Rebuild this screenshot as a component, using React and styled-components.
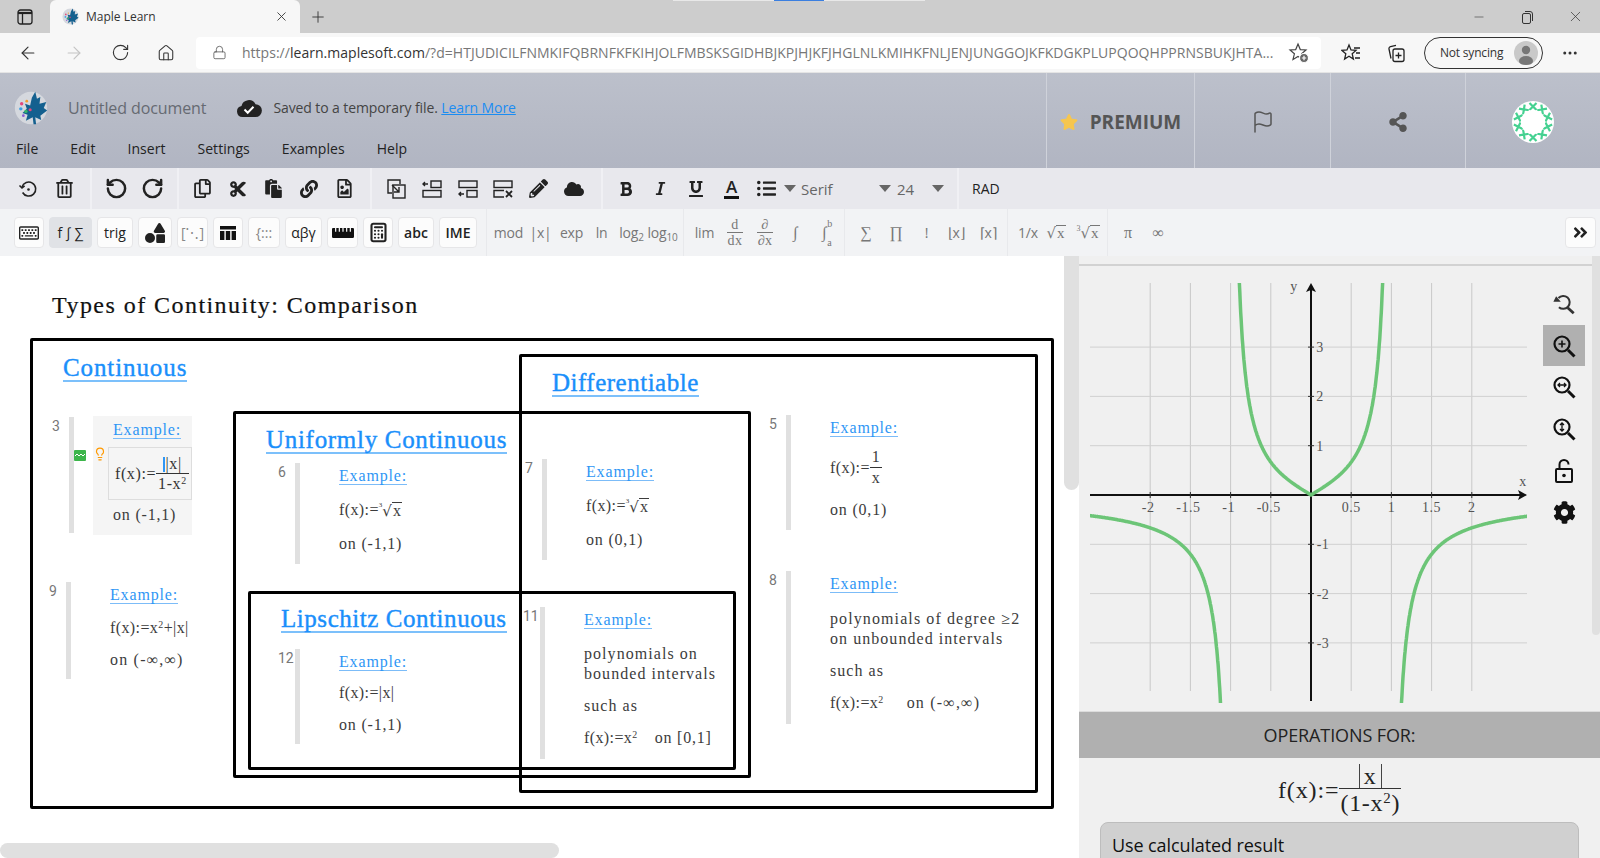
import React from 'react'
import styled, { createGlobalStyle } from 'styled-components';
import { ArrowLeft, ArrowRight, RotateCw, Home, X, Plus, Minus, Lock, MoreHorizontal, RotateCcw, Calculator, Flag, Lightbulb } from 'lucide-react';
import { FaRegTrashAlt, FaRegCopy, FaCut, FaPaste, FaLink, FaRegFileImage, FaPencilAlt, FaCloud, FaBold, FaItalic, FaUnderline, FaListUl, FaRegKeyboard, FaShapes, FaRulerHorizontal, FaShareAlt, FaStar, FaCog, FaAngleDoubleRight } from 'react-icons/fa';

const Global = createGlobalStyle`
html, body { margin: 0; padding: 0; height: 100%; overflow: hidden; background: #fff; }
* { box-sizing: border-box; }
body { font-family: "Open Sans", sans-serif; }
`;

const Page = styled.div`
width: 1600px;
height: 858px;
display: flex;
flex-direction: column;
overflow: hidden;
position: relative;
`;
const Spacer = styled.div`
width: ${p => p.$w}px;
flex-shrink: 0;
`;

/* browser frame */
const TopMark = styled.div`
position: absolute;
left: 673px;
top: 0;
width: 252px;
height: 1px;
background: linear-gradient(90deg, #e8e8e8 40%, #3b7fe0 40%, #3b7fe0 60%, #e8e8e8 60%);
`;
const TabStrip = styled.div`
height: 33px;
background: #cdcdcd;
display: flex;
align-items: flex-end;
flex-shrink: 0;
`;
const StripSlot = styled.div`
width: ${p => p.$w}px;
height: 33px;
display: flex;
align-items: center;
justify-content: center;
color: #333;
flex-shrink: 0;
`;
const Tab = styled.div`
width: 250px;
height: 33px;
background: #f7f7f7;
border-radius: 6px 6px 0 0;
display: flex;
align-items: center;
padding: 0 11px 0 12px;
font-size: 12px;
color: #333;
flex-shrink: 0;
`;
const TabTitle = styled.span`
margin-left: 7px;
flex: 1;
`;
const WindowButtons = styled.div`
margin-left: auto;
display: flex;
padding-right: 1px;
`;
const AddressRow = styled.div`
height: 40px;
background: #f7f7f7;
border-bottom: 1px solid #e4e4e4;
display: flex;
align-items: center;
padding-left: 2px;
flex-shrink: 0;
`;
const NavSlot = styled.div`
width: ${p => p.$w}px;
display: flex;
justify-content: center;
align-items: center;
color: ${p => p.$dim ? '#c4c4c4' : '#333'};
flex-shrink: 0;
`;
const UrlBox = styled.div`
width: 1125px;
height: 32px;
background: #fff;
border-radius: 4px;
display: flex;
align-items: center;
padding-left: 16px;
flex-shrink: 0;
margin-right: 8px;
color: #555;
`;
const UrlText = styled.div`
margin-left: 15px;
width: 1040px;
font-size: 14px;
letter-spacing: 0.03px;
white-space: nowrap;
overflow: hidden;
color: #777;
& b { font-weight: 400; color: #333; }
`;
const SyncPill = styled.div`
width: 119px;
height: 32px;
border: 1.5px solid #333;
border-radius: 16px;
display: flex;
align-items: center;
padding-left: 15px;
font-size: 12px;
letter-spacing: -0.2px;
color: #333;
margin-left: 5px;
flex-shrink: 0;
`;
const SyncAvatar = styled.span`
width: 24px;
height: 24px;
border-radius: 50%;
background: #c9c9c9;
margin-left: 11px;
overflow: hidden;
display: block;
`;

/* app header */
const Header = styled.div`
height: 95px;
display: flex;
background: linear-gradient(#bcc0cb, #b1b5c2);
flex-shrink: 0;
`;
const HeaderLeft = styled.div`
flex: 1;
display: flex;
flex-direction: column;
`;
const DocRow = styled.div`
height: 68px;
display: flex;
align-items: center;
padding: 1px 0 0 14px;
`;
const DocName = styled.span`
margin-left: 20px;
font-size: 16px;
color: #666a72;
letter-spacing: -0.1px;
`;
const SavedNote = styled.span`
margin-left: 11px;
font-size: 14px;
letter-spacing: -0.1px;
color: #444;
`;
const LearnMore = styled.a`
color: #1b8cf2;
text-decoration: underline;
`;
const MenuRow = styled.div`
display: flex;
gap: 32px;
padding-left: 16px;
font-size: 14px;
line-height: 16px;
letter-spacing: 0.05px;
color: #222;
`;
const HeadCell = styled.div`
width: ${p => p.$w}px;
border-left: 1px solid #cfd2da;
display: flex;
align-items: center;
justify-content: center;
gap: 12px;
color: #555;
padding-top: 2px;
`;
const PremiumText = styled.span`
font-size: 19px;
font-weight: 700;
color: #555;
`;

/* toolbars */
const ToolbarOne = styled.div`
height: 41px;
background: #e8e8ed;
display: flex;
flex-shrink: 0;
color: #222;
`;
const ToolGroup = styled.div`
display: flex;
align-items: center;
padding: 0 ${p => p.$right ?? 9}px 0 ${p => p.$left ?? 6}px;
border-right: 2px solid #f0f0f4;
`;
const IconCell = styled.div`
width: ${p => p.$w ?? 35.5}px;
height: 32px;
display: flex;
align-items: center;
justify-content: center;
flex-shrink: 0;
font-size: 14px;
`;
const Caret = styled.span`
width: 0;
height: 0;
border-left: 6px solid transparent;
border-right: 6px solid transparent;
border-top: 7px solid #666;
flex-shrink: 0;
`;
const FontName = styled.span`
font-size: 15px;
color: #666;
flex-shrink: 0;
width: ${p => p.$w}px;
`;
const RadLabel = styled.span`
font-size: 14px;
color: #222;
margin-left: 13px;
align-self: center;
`;
const ColorA = styled.span`
font-size: 17px;
line-height: 18px;
font-weight: 600;
border-bottom: 3px solid #111;
padding: 0 2px;
`;
const ToolbarTwo = styled.div`
height: 47px;
background: #f2f3f5;
display: flex;
flex-shrink: 0;
`;
const ButtonRow = styled.div`
display: flex;
align-items: center;
gap: 5px;
padding-left: 14px;
width: 486px;
`;
const PadButton = styled.button`
width: ${p => p.$w}px;
height: 31px;
padding: 0;
flex-shrink: 0;
display: flex;
align-items: center;
justify-content: center;
border: 1px solid ${p => p.$active ? '#e0e2e6' : '#e6e6e8'};
border-radius: 4px;
background: ${p => p.$active ? '#e0e2e6' : '#fcfcfc'};
color: ${p => p.$faded ? '#888' : '#222'};
font-family: "Open Sans", sans-serif;
font-size: 14px;
font-weight: ${p => p.$bold ? 600 : 400};
`;
const PadSection = styled.div`
display: flex;
align-items: center;
padding: 0 ${p => p.$right ?? 0}px 0 5px;
border-left: 1px solid #e8e9ec;
`;
const Key = styled.div`
width: ${p => p.$w}px;
height: 40px;
display: flex;
align-items: center;
justify-content: center;
flex-shrink: 0;
font-size: 14px;
letter-spacing: -0.2px;
color: #777;
& sub { font-size: 10px; line-height: 0; vertical-align: -3px; }
`;
const SerifKey = styled(Key)`
font-family: "Liberation Serif", serif;
font-size: 16px;
`;
const MiniFrac = styled.span`
display: inline-flex;
flex-direction: column;
align-items: center;
font-family: "Liberation Serif", serif;
font-size: 14px;
letter-spacing: 0.4px;
line-height: 15px;
`;
const MiniBottom = styled.span`
border-top: 1px solid #777;
padding: 0 1px;
`;
const Limits = styled.span`
display: inline-flex;
flex-direction: column;
justify-content: space-between;
height: 28px;
font-size: 10px;
line-height: 9px;
margin-left: 1px;
`;
const MoreButton = styled(PadButton)`
margin: 8px 4px 0 auto;
`;

/* main area */
const Main = styled.div`
flex: 1;
display: flex;
min-height: 0;
`;
const Editor = styled.div`
width: 1079px;
position: relative;
background: #fff;
flex-shrink: 0;
font-family: "Liberation Serif", serif;
overflow: hidden;
`;
const Thumb = styled.div`
position: absolute;
left: 1064px;
top: 0;
width: 15px;
height: 234px;
background: #e0e0e0;
border-radius: 0 0 8px 8px;
`;
const HThumb = styled.div`
position: absolute;
left: 0;
bottom: 0;
width: 559px;
height: 15px;
background: #e0e0e0;
border-radius: 8px;
`;
const DocTitle = styled.div`
position: absolute;
left: 52px;
top: 34px;
font-size: 24px;
line-height: 30px;
letter-spacing: 1.45px;
color: #111;
white-space: nowrap;
-webkit-text-stroke: 0.2px #111;
`;
/* overlapping region boxes sit on the free document canvas */
const Region = styled.div`
position: absolute;
left: ${p => p.$x}px;
top: ${p => p.$y}px;
width: ${p => p.$w}px;
height: ${p => p.$h}px;
border: 3px solid #000;
border-radius: 2px;
`;
const Heading = styled.div`
position: absolute;
left: ${p => p.$x}px;
top: ${p => p.$y}px;
height: 28px;
line-height: 28px;
font-size: 25px;
letter-spacing: ${p => p.$sp}px;
color: #1a8ffb;
border-bottom: 2px solid #7cc0fb;
white-space: nowrap;
-webkit-text-stroke: 0.4px #1a8ffb;
`;
const Group = styled.div`
position: absolute;
left: ${p => p.$x}px;
top: ${p => p.$y}px;
display: flex;
`;
const Num = styled.div`
width: 17px;
font-family: Roboto, sans-serif;
font-size: 14px;
line-height: 18px;
color: #777;
flex-shrink: 0;
`;
const Bar = styled.div`
width: 5px;
background: #e0e0e0;
flex-shrink: 0;
`;
const Body = styled.div`
display: flex;
flex-direction: column;
margin-left: 39px;
padding-top: 3px;
padding-bottom: ${p => p.$pad}px;
`;
const SelectedBody = styled(Body)`
margin: -1px 0 -2px 19px;
padding-left: 20px;
padding-top: 4px;
width: 99px;
background: #f5f5f5;
`;
const Row = styled.div`
display: flex;
align-items: center;
min-height: 20px;
margin-top: ${p => p.$gap ?? 0}px;
font-size: 16px;
line-height: 20px;
letter-spacing: ${p => p.$sp ?? 0.8}px;
color: #3c3c3c;
white-space: nowrap;
`;
const Example = styled.span`
display: block;
height: 18px;
line-height: 17px;
font-size: 16px;
letter-spacing: 0.85px;
color: #2e96f5;
border-bottom: 1.5px solid #7cbcf8;
`;
const Gapped = styled.span`
margin-left: ${p => p.$left}px;
letter-spacing: ${p => p.$sp ?? 0.8}px;
`;
const Wave = styled.svg`
position: absolute;
left: 22px;
top: 33px;
`;
const Bulb = styled.span`
position: absolute;
left: 41px;
top: 30px;
color: #f90;
`;
const FormulaBox = styled.div`
margin: 7px 0 0 -5px;
width: 84px;
height: 53px;
border: 1px solid #ddd;
display: flex;
align-items: center;
padding-left: 6px;
font-size: 16px;
color: #333;
white-space: nowrap;
letter-spacing: 0.6px;
`;
const Frac = styled.span`
display: inline-flex;
flex-direction: column;
align-items: center;
line-height: ${p => p.$lh ?? 20}px;
`;
const FracBottom = styled.span`
border-top: 1px solid #333;
align-self: stretch;
text-align: center;
padding: 0 2px;
`;
const Sup = styled.span`
font-size: 0.62em;
vertical-align: 0.55em;
line-height: 0;
`;
const Caretbar = styled.span`
display: inline-block;
width: 1.5px;
height: 15px;
background: #2e96f5;
vertical-align: -3px;
margin-right: 1px;
`;
const Root = styled.span`
display: inline-flex;
align-items: flex-end;
letter-spacing: 0;
`;
const RootIndex = styled.span`
font-size: ${p => p.$size ?? 10}px;
line-height: 1;
align-self: flex-start;
`;
const RootMark = styled.span`
font-family: "DejaVu Sans", sans-serif;
font-size: ${p => p.$size ?? 17}px;
line-height: 1;
`;
const Radicand = styled.span`
border-top: 1px solid currentColor;
line-height: 1;
font-size: ${p => p.$size ?? 16}px;
padding: 0 1px;
`;

/* graph panel */
const Panel = styled.div`
flex: 1;
background: #f0f0f0;
display: flex;
flex-direction: column;
position: relative;
min-width: 0;
overflow: hidden;
`;
const PanelThumb = styled.div`
position: absolute;
right: 0;
top: 0;
width: 8px;
height: 379px;
background: #e0e0e0;
border-radius: 0 0 4px 4px;
`;
const TopRule = styled.div`
margin: 8px 8px 0 0;
height: 2px;
background: #d2d2d2;
flex-shrink: 0;
`;
const GraphRow = styled.div`
display: flex;
height: 446px;
flex-shrink: 0;
border-bottom: 1px solid #dcdcdc;
`;
const GraphSvg = styled.svg`
flex-shrink: 0;
`;
const GraphLabel = styled.text`
font-family: "Liberation Serif", serif;
font-size: 14px;
fill: #555;
text-anchor: middle;
letter-spacing: 0.5px;
`;
const ToolColumn = styled.div`
width: 42px;
padding-top: 17px;
display: flex;
flex-direction: column;
flex-shrink: 0;
`;
const ToolSlot = styled.div`
height: 41.7px;
display: flex;
align-items: center;
justify-content: center;
background: ${p => p.$active ? '#b0b0b0' : 'transparent'};
color: #111;
`;
const OpsBar = styled.div`
height: 46px;
background: #b0b0b0;
display: flex;
align-items: center;
justify-content: center;
font-size: 18px;
letter-spacing: -0.1px;
color: #222;
flex-shrink: 0;
`;
const OpsFormula = styled.div`
height: 64px;
display: flex;
align-items: center;
justify-content: center;
font-family: "Liberation Serif", serif;
font-size: 24px;
color: #222;
letter-spacing: 0.9px;
flex-shrink: 0;
`;
const TallBars = styled.span`
border-left: 1px solid #444;
border-right: 1px solid #444;
padding: 0 4px;
line-height: 24px;
`;
const OpsBottom = styled.span`
border-top: 1.5px solid #333;
padding: 0 1px;
line-height: 28px;
letter-spacing: 0.7px;
`;
const ResultButton = styled.div`
margin: 0 21px;
height: 50px;
padding: 8px 11px;
border: 1px solid #bdbdbd;
border-radius: 8px 8px 0 0;
background: #d0d0d0;
font-size: 18px;
font-weight: 500;
line-height: 28px;
letter-spacing: -0.1px;
color: #111;
flex-shrink: 0;
`;

const LeafLogo = ({ size }) => (
  <svg width={size} height={size} viewBox="0 0 40 40">
    <circle cx="20" cy="20" r="19" fill="#d5d8de" />
    <polygon points="25,1 27,9 31,7 30,15 38,13 35,20 39,23 31,29 32,34 25,31 26,39 23,39 22,31 14,35 16,28 10,26 15,21 13,15 19,17 21,8" fill="#14608f" />
    <circle cx="9" cy="15" r="2" fill="#e3487c" />
    <circle cx="15" cy="12" r="1.6" fill="#f39a2c" />
    <circle cx="8" cy="21" r="2" fill="#3ba0e6" />
    <circle cx="14" cy="24" r="2" fill="#36b56a" />
    <circle cx="19" cy="22" r="1.8" fill="#e3487c" />
    <circle cx="11" cy="29" r="1.6" fill="#8a5bd6" />
  </svg>
);

const SidebarIcon = () => (
  <svg width="16" height="16" viewBox="0 0 16 16" fill="none" stroke="#222" strokeWidth="1.3">
    <rect x="1" y="1" width="14" height="14" rx="2.5" />
    <path d="M1 4h14" strokeWidth="2.2" />
    <path d="M5.5 4v11" />
  </svg>
);

const AddFavorite = () => (
  <svg width="22" height="22" viewBox="0 0 22 22" fill="none" stroke="#444" strokeWidth="1.2">
    <polygon points="10,2 12.3,7.6 18,8 13.6,11.8 15,17.4 10,14.4 5,17.4 6.4,11.8 2,8 7.7,7.6" />
    <circle cx="16" cy="16" r="4.5" fill="#666" stroke="#fff" />
    <path d="M16 13.8v4.4M13.8 16h4.4" stroke="#fff" />
  </svg>
);

const Favorites = () => (
  <svg width="20" height="20" viewBox="0 0 20 20" fill="none" stroke="#222" strokeWidth="1.3">
    <polygon points="8,2 10,7 15,7.4 11.2,10.8 12.4,16 8,13.2 3.6,16 4.8,10.8 1,7.4 6,7" />
    <path d="M13 5h6M15 10h4M14 15h5" />
  </svg>
);

const Collections = () => (
  <svg width="20" height="20" viewBox="0 0 20 20" fill="none" stroke="#222" strokeWidth="1.3">
    <path d="M5 15.5 3 6a2 2 0 0 1 1.5-2.4L10 2.4" />
    <rect x="7" y="6" width="11" height="12.5" rx="2" />
    <path d="M12.5 9.5v6M9.5 12.5h6" />
  </svg>
);

const RestoreIcon = () => (
  <svg width="13" height="14" viewBox="0 0 13 14" fill="none" stroke="#333">
    <rect x="1.5" y="3.5" width="8" height="10" rx="1.5" />
    <path d="M4 1.5h5a2.500 2.500 0 0 1 2.500 2.500v7" />
  </svg>
);

const CloudCheck = () => (
  <svg width="26" height="20" viewBox="0 0 26 20">
    <path d="M6.5 19a5.5 5.5 0 0 1-1-10.9A7.5 7.5 0 0 1 19.5 6.2 6.4 6.4 0 0 1 19.5 19z" fill="#222" />
    <path d="M8.5 11.5l3.2 3.2 5.8-6" stroke="#fff" strokeWidth="2" fill="none" />
  </svg>
);

const ResetHistory = () => (
  <svg width="20" height="20" viewBox="0 0 20 20" fill="none" stroke="#222" strokeWidth="1.6">
    <path d="M4.6 13.5A7 7 0 1 0 4 8" />
    <path d="M1.5 6.5 4 9l2.6-2.2" />
    <circle cx="10.5" cy="10.5" r="1.3" fill="#222" stroke="none" />
  </svg>
);

const InsertInto = () => (
  <svg width="22" height="22" viewBox="0 0 22 22" fill="none" stroke="#222" strokeWidth="1.4">
    <path d="M14 6V2H2v13h4" />
    <rect x="7" y="7" width="12" height="13" />
    <path d="M6 7l7 7M13 9v5H8" />
  </svg>
);

const AddRegion = ({ after }) => (
  <svg width="24" height="20" viewBox="0 0 24 20" fill="none" stroke="#222" strokeWidth="1.4">
    {after ? (
      <>
        <rect x="3" y="2" width="18" height="6.5" />
        <rect x="11" y="11.5" width="10" height="6.5" />
        <path d="M3 15h5M5 13l-2 2 2 2" />
      </>
    ) : (
      <>
        <rect x="11" y="2" width="10" height="6.5" />
        <rect x="3" y="11.5" width="18" height="6.5" />
        <path d="M3 5h5M5 3 3 5l2 2" />
      </>
    )}
  </svg>
);

const DeleteRegion = () => (
  <svg width="24" height="20" viewBox="0 0 24 20" fill="none" stroke="#222" strokeWidth="1.4">
    <rect x="3" y="2" width="18" height="6.5" />
    <path d="M13 11.5H3V18h10" />
    <path d="M15 12l6 6M21 12l-6 6" strokeWidth="1.8" />
  </svg>
);

const TableIcon = () => (
  <svg width="16" height="16" viewBox="0 0 16 16" fill="#111">
    <rect x="0" y="1" width="16" height="3.5" />
    <rect x="0" y="6" width="4.4" height="9" />
    <rect x="5.8" y="6" width="4.4" height="9" />
    <rect x="11.6" y="6" width="4.4" height="9" />
  </svg>
);

const Glass = ({ children }) => (
  <svg width="26" height="26" viewBox="0 0 26 26" fill="none" stroke="#111" strokeWidth="2.2">
    <circle cx="11" cy="11" r="7.5" />
    <path d="M17 17l6.5 6.5" strokeWidth="3" />
    {children}
  </svg>
);

const ResetGlass = () => (
  <svg width="24" height="24" viewBox="0 0 26 26" fill="none" stroke="#333" strokeWidth="2.2">
    <path d="M7 6.500A7 7 0 1 1 7.500 16.500" />
    <path d="M1.500 10.500h8l-5-6z" fill="#333" stroke="none" />
    <path d="M17 17l6.500 6" strokeWidth="3" />
  </svg>
);

const OpenLock = () => (
  <svg width="22" height="26" viewBox="0 0 22 26" fill="none" stroke="#111" strokeWidth="2">
    <rect x="3" y="11" width="16" height="13" rx="1" />
    <path d="M6.500 11V6.500a4.500 4.500 0 0 1 9 0" />
    <circle cx="11" cy="17.500" r="1.800" fill="#111" stroke="none" />
  </svg>
);

const IdAvatar = () => {
  const marks = Array.from({ length: 10 }, (_, i) => i * 36);
  return (
    <svg width="42" height="42" viewBox="0 0 42 42">
      <circle cx="21" cy="21" r="21" fill="#fff" />
      {marks.map(a => (
        <g key={a} transform={`rotate(${a} 21 21)`}>
          <path d="M17.500 2l7 7M24.500 2l-7 7" stroke="#45d191" strokeWidth="2.2" />
        </g>
      ))}
      <circle cx="21" cy="21" r="12" fill="#fff" />
    </svg>
  );
};

/* y = |x| / (1 - x^2) in the graph's pixels */
const ox = 232;
const oy = 229;
const ux = 80.4;
const uy = 49.3;
const px = x => ox + x * ux;
const py = y => oy - y * uy;
const branch = (from, to) => {
  const pts = [];
  for (let x = from; x <= to; x += 0.004) {
    const y = Math.abs(x) / (1 - x * x);
    if (Math.abs(y) < 12) pts.push(`${px(x).toFixed(1)},${py(y).toFixed(1)}`);
  }
  return 'M' + pts.join('L');
};

const xTicks = [-2, -1.5, -1, -0.5, 0.5, 1, 1.5, 2];
const yTicks = [3, 2, 1, -1, -2, -3];

const Graph = () => (
  <GraphSvg width="464" height="446" viewBox="0 0 464 446">
    <defs>
      <clipPath id="plot"><rect x="11" y="17" width="437" height="420" /></clipPath>
    </defs>
    {xTicks.map(t => <line key={t} x1={px(t)} x2={px(t)} y1="17" y2="425" stroke="#c8c8c8" />)}
    {yTicks.map(t => <line key={t} x1="11" x2="448" y1={py(t)} y2={py(t)} stroke="#d0d0d0" />)}
    <line x1="11" x2="444" y1={oy} y2={oy} stroke="#111" strokeWidth="2" />
    <line x1={ox} x2={ox} y1="22" y2="435" stroke="#111" strokeWidth="2" />
    <polygon points="448,229 439,224 441,229 439,234" fill="#111" />
    <polygon points="232,17 227,26 232,24 237,26" fill="#111" />
    {xTicks.map(t => <line key={t} x1={px(t)} x2={px(t)} y1={oy - 3} y2={oy + 3} stroke="#333" />)}
    {yTicks.map(t => <line key={t} x1={ox - 3} x2={ox + 3} y1={py(t)} y2={py(t)} stroke="#333" />)}
    {xTicks.map(t => <GraphLabel key={t} x={px(t) - (t < 0 ? 2 : 0)} y={oy + 17}>{t}</GraphLabel>)}
    {yTicks.map(t => <GraphLabel key={t} x={ox + (t < 0 ? 12 : 9)} y={py(t) + 5}>{t}</GraphLabel>)}
    <GraphLabel x="444" y="220">x</GraphLabel>
    <GraphLabel x="215" y="25">y</GraphLabel>
    <g clipPath="url(#plot)" fill="none" stroke="#6cc577" strokeWidth="3.5">
      <path d={branch(-2.9, -1.01)} />
      <path d={branch(-0.99, 0.99)} />
      <path d={branch(1.01, 2.9)} />
    </g>
  </GraphSvg>
);

const CubeRoot = () => (
  <Root>
    <RootIndex $size={7}>3</RootIndex>
    <RootMark $size={15}>√</RootMark>
    <Radicand>x</Radicand>
  </Root>
);

const SqrtKey = ({ index }) => (
  <Root>
    {index && <RootIndex $size={8}>3</RootIndex>}
    <RootMark $size={15}>√</RootMark>
    <Radicand $size={15}>x</Radicand>
  </Root>
);

const App = () => {
  return (
    <Page>
      <Global />
      <TopMark />
      <TabStrip>
        <StripSlot $w={50}><SidebarIcon /></StripSlot>
        <Tab>
          <LeafLogo size={17} />
          <TabTitle>Maple Learn</TabTitle>
          <X size={15} strokeWidth={1.4} />
        </Tab>
        <StripSlot $w={36}><Plus size={18} strokeWidth={1.2} /></StripSlot>
        <WindowButtons>
          <StripSlot $w={48}><Minus size={14} strokeWidth={1} /></StripSlot>
          <StripSlot $w={48}><RestoreIcon /></StripSlot>
          <StripSlot $w={48}><X size={17} strokeWidth={1} /></StripSlot>
        </WindowButtons>
      </TabStrip>
      <AddressRow>
        <NavSlot $w={52}><ArrowLeft size={20} strokeWidth={1.4} /></NavSlot>
        <NavSlot $w={40} $dim><ArrowRight size={20} strokeWidth={1.4} /></NavSlot>
        <NavSlot $w={52}><RotateCw size={19} strokeWidth={1.4} /></NavSlot>
        <NavSlot $w={40}><Home size={18} strokeWidth={1.4} /></NavSlot>
        <Spacer $w={10} />
        <UrlBox>
          <Lock size={15} strokeWidth={1.3} />
          <UrlText>https://<b>learn.maplesoft.com</b>/?d=HTJUDICILFNMKIFQBRNFKFKIHJOLFMBSKSGIDHBJKPJHJKFJHGLNLKMIHKFNLJENJUNGGOJKFKDGKPLUPQOQHPPRNSBUKJHTA...</UrlText>
          <NavSlot $w={44}><AddFavorite /></NavSlot>
        </UrlBox>
        <NavSlot $w={44}><Favorites /></NavSlot>
        <NavSlot $w={46}><Collections /></NavSlot>
        <SyncPill>
          Not syncing
          <SyncAvatar>
            <svg width="24" height="24" viewBox="0 0 24 24" fill="#777"><circle cx="12" cy="9" r="4.2" /><ellipse cx="12" cy="20" rx="7" ry="5" /></svg>
          </SyncAvatar>
        </SyncPill>
        <NavSlot $w={54}><MoreHorizontal size={18} strokeWidth={2} /></NavSlot>
      </AddressRow>

      <Header>
        <HeaderLeft>
          <DocRow>
            <LeafLogo size={34} />
            <DocName>Untitled document</DocName>
            <Spacer $w={30} />
            <CloudCheck />
            <SavedNote>Saved to a temporary file. <LearnMore>Learn More</LearnMore></SavedNote>
          </DocRow>
          <MenuRow>
            <span>File</span><span>Edit</span><span>Insert</span><span>Settings</span><span>Examples</span><span>Help</span>
          </MenuRow>
        </HeaderLeft>
        <HeadCell $w={148}><FaStar size={18} color="#f6c64f" /><PremiumText>PREMIUM</PremiumText></HeadCell>
        <HeadCell $w={136}><Flag size={24} strokeWidth={1.5} /></HeadCell>
        <HeadCell $w={135}><FaShareAlt size={20} /></HeadCell>
        <HeadCell $w={135}><IdAvatar /></HeadCell>
      </Header>

      <ToolbarOne>
        <ToolGroup $left={10} $right={8}>
          <IconCell $w={36}><ResetHistory /></IconCell>
          <IconCell $w={36}><FaRegTrashAlt size={19} /></IconCell>
        </ToolGroup>
        <ToolGroup $right={7}>
          <IconCell $w={36}><RotateCcw size={23} strokeWidth={2.6} /></IconCell>
          <IconCell $w={36}><RotateCw size={23} strokeWidth={2.6} /></IconCell>
        </ToolGroup>
        <ToolGroup $right={7.5}>
          <IconCell><FaRegCopy size={19} /></IconCell>
          <IconCell><FaCut size={18} /></IconCell>
          <IconCell><FaPaste size={19} /></IconCell>
          <IconCell><FaLink size={18} /></IconCell>
          <IconCell><FaRegFileImage size={19} /></IconCell>
        </ToolGroup>
        <ToolGroup $left={7}>
          <IconCell><InsertInto /></IconCell>
          <IconCell><AddRegion /></IconCell>
          <IconCell><AddRegion after /></IconCell>
          <IconCell><DeleteRegion /></IconCell>
          <IconCell><FaPencilAlt size={19} /></IconCell>
          <IconCell><FaCloud size={20} /></IconCell>
        </ToolGroup>
        <ToolGroup $left={5} $right={8}>
          <IconCell $w={35}><FaBold size={16} /></IconCell>
          <IconCell $w={35}><FaItalic size={15} /></IconCell>
          <IconCell $w={36}><FaUnderline size={16} /></IconCell>
          <IconCell $w={35}><ColorA>A</ColorA></IconCell>
          <IconCell $w={35}><FaListUl size={19} /></IconCell>
          <Caret />
          <Spacer $w={5} />
          <FontName $w={78}>Serif</FontName>
          <Caret />
          <Spacer $w={6} />
          <FontName $w={35}>24</FontName>
          <Caret />
          <Spacer $w={5} />
        </ToolGroup>
        <RadLabel>RAD</RadLabel>
      </ToolbarOne>

      <ToolbarTwo>
        <ButtonRow>
          <PadButton $w={30}><FaRegKeyboard size={20} /></PadButton>
          <PadButton $w={43} $active>f ∫ ∑</PadButton>
          <PadButton $w={36}>trig</PadButton>
          <PadButton $w={34}><FaShapes size={20} /></PadButton>
          <PadButton $w={31} $faded>[⋱]</PadButton>
          <PadButton $w={30}><TableIcon /></PadButton>
          <PadButton $w={32} $faded>{'{:::'}</PadButton>
          <PadButton $w={37}>αβγ</PadButton>
          <PadButton $w={31}><FaRulerHorizontal size={22} color="#111" /></PadButton>
          <PadButton $w={30}><Calculator size={21} strokeWidth={2.4} /></PadButton>
          <PadButton $w={36} $bold>abc</PadButton>
          <PadButton $w={38} $bold>IME</PadButton>
        </ButtonRow>
        <PadSection $right={5}>
          <Key $w={33}>mod</Key>
          <Key $w={31}>|x|</Key>
          <Key $w={31}>exp</Key>
          <Key $w={29}>ln</Key>
          <Key $w={31}><span>log<sub>2</sub></span></Key>
          <Key $w={31}><span>log<sub>10</sub></span></Key>
        </PadSection>
        <PadSection>
          <Key $w={31}>lim</Key>
          <Key $w={30}><MiniFrac>d<MiniBottom>dx</MiniBottom></MiniFrac></Key>
          <Key $w={30}><MiniFrac>∂<MiniBottom>∂x</MiniBottom></MiniFrac></Key>
          <SerifKey $w={30}>∫</SerifKey>
          <SerifKey $w={34}>∫<Limits><span>b</span><span>a</span></Limits></SerifKey>
        </PadSection>
        <PadSection>
          <SerifKey $w={32}>∑</SerifKey>
          <SerifKey $w={28}>∏</SerifKey>
          <Key $w={33}>!</Key>
          <Key $w={26}>⌊x⌋</Key>
          <Key $w={38}>⌈x⌉</Key>
        </PadSection>
        <PadSection>
          <Key $w={30}>1/x</Key>
          <SerifKey $w={26}><SqrtKey /></SerifKey>
          <SerifKey $w={38}><SqrtKey index /></SerifKey>
        </PadSection>
        <PadSection>
          <SerifKey $w={30}>π</SerifKey>
          <SerifKey $w={30}>∞</SerifKey>
        </PadSection>
        <MoreButton $w={31}><FaAngleDoubleRight size={17} /></MoreButton>
      </ToolbarTwo>

      <Main>
        <Editor>
          <DocTitle>Types of Continuity: Comparison</DocTitle>

          <Region $x={30} $y={82} $w={1024} $h={471} />
          <Region $x={519} $y={98} $w={519} $h={439} />
          <Region $x={233} $y={155} $w={518} $h={367} />
          <Region $x={248} $y={335} $w={488} $h={179} />

          <Heading $x={63} $y={98} $sp={0.9}>Continuous</Heading>
          <Heading $x={552} $y={113} $sp={0.5}>Differentiable</Heading>
          <Heading $x={266} $y={170} $sp={0.7}>Uniformly Continuous</Heading>
          <Heading $x={281} $y={349} $sp={0.55}>Lipschitz Continuous</Heading>

          <Group $x={52} $y={161}>
            <Num>3</Num>
            <Bar />
            <SelectedBody $pad={10}>
              <Row><Example>Example:</Example></Row>
              <FormulaBox>
                f(x):=
                <Frac $lh={19}>
                  <span><Caretbar />|x|</span>
                  <FracBottom>1-x<Sup>2</Sup></FracBottom>
                </Frac>
              </FormulaBox>
              <Row $gap={5}>on (-1,1)</Row>
            </SelectedBody>
            <Wave width="12" height="11" viewBox="0 0 12 11">
              <rect width="12" height="11" rx="1" fill="#3cb54a" />
              <path d="M1 6l2-2 2 2 2-2 2 2 2-2" stroke="#fff" fill="none" />
            </Wave>
            <Bulb><Lightbulb size={14} strokeWidth={2} /></Bulb>
          </Group>

          <Group $x={49} $y={326}>
            <Num>9</Num>
            <Bar />
            <Body $pad={9}>
              <Row><Example>Example:</Example></Row>
              <Row $gap={13} $sp={0.4}><span>f(x):=x<Sup>2</Sup>+|x|</span></Row>
              <Row $gap={12} $sp={1.2}>on (-∞,∞)</Row>
            </Body>
          </Group>

          <Group $x={278} $y={207}>
            <Num>6</Num>
            <Bar />
            <Body $pad={10}>
              <Row><Example>Example:</Example></Row>
              <Row $gap={14} $sp={0.4}>f(x):=<CubeRoot /></Row>
              <Row $gap={14}>on (-1,1)</Row>
            </Body>
          </Group>

          <Group $x={278} $y={393}>
            <Num>12</Num>
            <Bar />
            <Body $pad={9}>
              <Row><Example>Example:</Example></Row>
              <Row $gap={11} $sp={0.4}>f(x):=|x|</Row>
              <Row $gap={12}>on (-1,1)</Row>
            </Body>
          </Group>

          <Group $x={525} $y={203}>
            <Num>7</Num>
            <Bar />
            <Body $pad={10}>
              <Row><Example>Example:</Example></Row>
              <Row $gap={14} $sp={0.4}>f(x):=<CubeRoot /></Row>
              <Row $gap={14}>on (0,1)</Row>
            </Body>
          </Group>

          <Group $x={523} $y={351}>
            <Num>11</Num>
            <Bar />
            <Body $pad={11}>
              <Row><Example>Example:</Example></Row>
              <Row $gap={14} $sp={1.05}>polynomials on</Row>
              <Row $sp={1.05}>bounded intervals</Row>
              <Row $gap={12} $sp={1.05}>such as</Row>
              <Row $gap={12} $sp={0.4}><span>f(x):=x<Sup>2</Sup></span><Gapped $left={17}>on [0,1]</Gapped></Row>
            </Body>
          </Group>

          <Group $x={769} $y={159}>
            <Num>5</Num>
            <Bar />
            <Body $pad={10}>
              <Row><Example>Example:</Example></Row>
              <Row $gap={9} $sp={0.4}>f(x):=<Frac><span>1</span><FracBottom>x</FracBottom></Frac></Row>
              <Row $gap={12}>on (0,1)</Row>
            </Body>
          </Group>

          <Group $x={769} $y={315}>
            <Num>8</Num>
            <Bar />
            <Body $pad={11}>
              <Row><Example>Example:</Example></Row>
              <Row $gap={15} $sp={1.1}>polynomials of degree ≥2</Row>
              <Row $sp={1.05}>on unbounded intervals</Row>
              <Row $gap={12} $sp={1.05}>such as</Row>
              <Row $gap={12} $sp={0.4}><span>f(x):=x<Sup>2</Sup></span><Gapped $left={23} $sp={1.2}>on (-∞,∞)</Gapped></Row>
            </Body>
          </Group>

          <Thumb />
          <HThumb />
        </Editor>

        <Panel>
          <TopRule />
          <GraphRow>
            <Graph />
            <ToolColumn>
              <ToolSlot><ResetGlass /></ToolSlot>
              <ToolSlot $active>
                <Glass><path d="M11 7.500v7M7.500 11h7" strokeWidth="1.6" /></Glass>
              </ToolSlot>
              <ToolSlot>
                <Glass><path d="M7 11h8M9 9l-2 2 2 2M13 9l2 2-2 2" strokeWidth="1.3" /></Glass>
              </ToolSlot>
              <ToolSlot>
                <Glass><path d="M11 7v8M9 9l2-2 2 2M9 13l2 2 2-2" strokeWidth="1.3" /></Glass>
              </ToolSlot>
              <ToolSlot><OpenLock /></ToolSlot>
              <ToolSlot><FaCog size={23} /></ToolSlot>
            </ToolColumn>
          </GraphRow>
          <OpsBar>OPERATIONS FOR:</OpsBar>
          <OpsFormula>
            f(x):=
            <Frac $lh={28}>
              <TallBars>x</TallBars>
              <OpsBottom>(1-x<Sup>2</Sup>)</OpsBottom>
            </Frac>
          </OpsFormula>
          <ResultButton>Use calculated result</ResultButton>
          <PanelThumb />
        </Panel>
      </Main>
    </Page>
  )
}

export default App;
